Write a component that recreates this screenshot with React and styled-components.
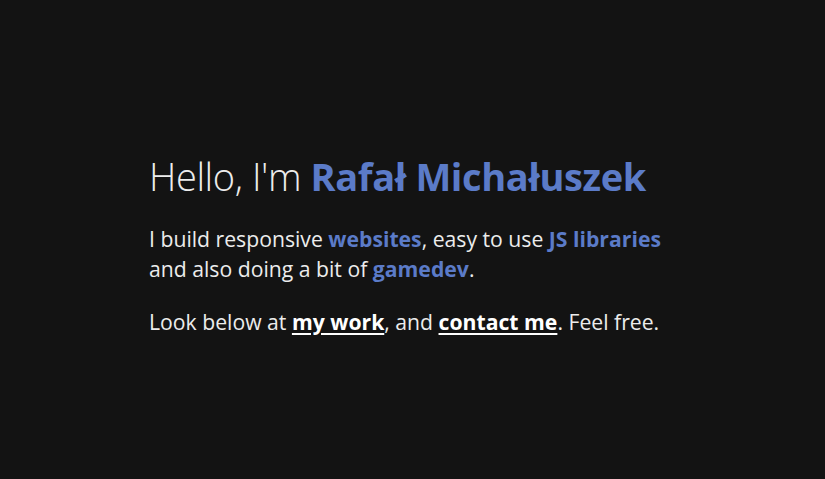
import styled, { createGlobalStyle } from "styled-components";

const GlobalStyle = createGlobalStyle`
  html, body {
    margin: 0;
    padding: 0;
    background: #131313;
  }
  body {
    font-family: "Open Sans", "Noto Sans", sans-serif;
    color: #ececec;
  }
`;

const Page = styled.main`
  display: flex;
  align-items: center;
  justify-content: center;
  min-height: 100vh;
`;

const Intro = styled.section`
  width: 527px;
  padding-top: 10px;
`;

const Title = styled.h1`
  margin: 0 0 22px;
  font-size: 38px;
  font-weight: 300;
  line-height: 1.3;
  letter-spacing: -0.4px;
`;

const Name = styled.strong`
  font-weight: 700;
  color: #5b7bc8;
`;

const Text = styled.p`
  margin: 0 0 23px;
  font-size: 21.2px;
  line-height: 30px;

  &:last-child {
    margin-bottom: 0;
  }
`;

const Skill = styled.strong`
  font-weight: 700;
  color: #5b7bc8;
`;

const Link = styled.a`
  font-weight: 700;
  color: #fff;
  text-decoration: underline;
  text-underline-offset: 3px;
  text-decoration-thickness: 2px;
`;

export default function App() {
  return (
    <>
      <GlobalStyle />
      <Page>
        <Intro>
          <Title>
            Hello, I'm <Name>Rafał Michałuszek</Name>
          </Title>
          <Text>
            I build responsive <Skill>websites</Skill>, easy to use{" "}
            <Skill>JS libraries</Skill> and also doing a bit of{" "}
            <Skill>gamedev</Skill>.
          </Text>
          <Text>
            Look below at <Link href="#work">my work</Link>, and{" "}
            <Link href="#contact">contact me</Link>. Feel free.
          </Text>
        </Intro>
      </Page>
    </>
  );
}
